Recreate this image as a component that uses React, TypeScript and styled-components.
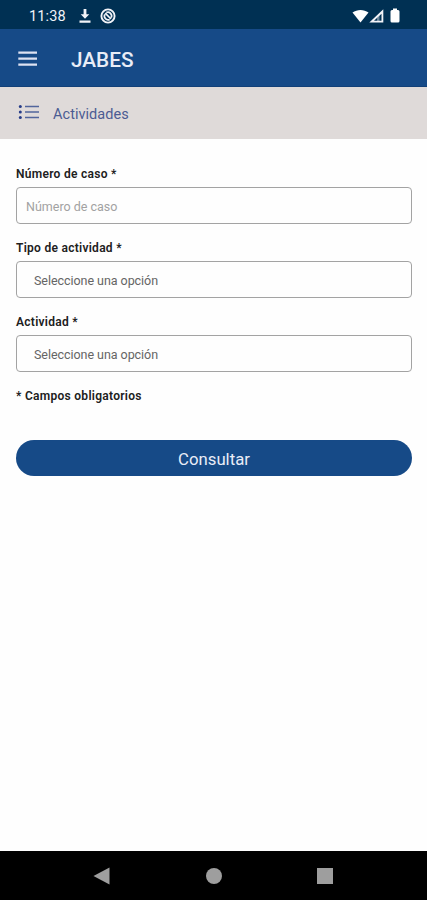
import React from 'react';
import styled, { createGlobalStyle } from 'styled-components';

const GlobalStyle = createGlobalStyle`
  * { box-sizing: border-box; }
  body { margin: 0; background: #fff; font-family: Roboto, "Liberation Sans", sans-serif; }
`;

const Screen = styled.div`
  display: flex;
  flex-direction: column;
  width: 100%;
  height: 900px;
  overflow: hidden;
  background: #fefefe;
`;

const StatusBar = styled.header`
  display: flex;
  align-items: center;
  height: 29px;
  padding: 2px 27px 0 29px;
  background: #003053;
  color: #f2f3f8;
`;

const Clock = styled.span`
  width: 49px;
  margin-top: 2px;
  font-size: 14.5px;
  line-height: 18px;
  letter-spacing: 0.15px;
`;

const StatusIcons = styled.div<{ $end?: boolean }>`
  display: flex;
  align-items: center;
  margin-left: ${({ $end }) => ($end ? 'auto' : '0')};
`;

const AppBar = styled.div`
  display: flex;
  align-items: center;
  height: 58px;
  padding: 2px 18px 0;
  background: #164a87;
  border-bottom: 1px solid #124078;
`;

const MenuButton = styled.button`
  display: flex;
  width: 52px;
  padding: 0;
  border: 0;
  background: none;
`;

const Title = styled.h1`
  margin: 2px 0 0 1px;
  font-size: 20.75px;
  font-weight: 500;
  line-height: 26px;
  color: #e9edf7;
`;

const SectionBar = styled.div`
  display: flex;
  align-items: center;
  gap: 13px;
  height: 52px;
  padding: 0 18px;
  background: #dfdad9;
`;

const SectionName = styled.h2`
  margin: 3px 0 0;
  font-size: 14.5px;
  font-weight: 400;
  line-height: 20px;
  letter-spacing: 0.04px;
  color: #4c5c93;
`;

const Form = styled.form`
  display: flex;
  flex: 1;
  flex-direction: column;
  padding: 28px 15px 0 16px;
`;

const Field = styled.div`
  display: flex;
  flex-direction: column;
  height: 74px;
`;

const Label = styled.label`
  height: 20px;
  font-size: 12px;
  font-weight: 600;
  line-height: 15px;
  letter-spacing: 0.28px;
  white-space: nowrap;
  color: #202020;
`;

const TextInput = styled.input`
  height: 37px;
  padding: 1px 9px 0;
  border: 1px solid #a3a3a3;
  border-radius: 4px;
  background: #fefefe;
  font: 400 12.5px Roboto, sans-serif;
  letter-spacing: 0;
  outline: 0;
  &::placeholder { color: #a2a2a2; opacity: 1; }
`;

const SelectBox = styled.div`
  display: flex;
  align-items: center;
  height: 37px;
  padding: 1px 17px 0;
  border: 1px solid #a3a3a3;
  border-radius: 4px;
  font-size: 12.5px;
  letter-spacing: -0.05px;
  color: #656565;
`;

const RequiredNote = styled(Label).attrs({ as: 'p' })`
  margin: 0 0 31px;
`;

const SubmitButton = styled.button`
  height: 36px;
  padding: 2px 0 0;
  border: 0;
  border-radius: 18px;
  background: #164a87;
  color: #e9edf7;
  font: 400 16.75px Roboto, sans-serif;
  letter-spacing: 0;
`;

const NavBar = styled.nav`
  display: flex;
  align-items: center;
  justify-content: space-between;
  height: 49px;
  padding: 0 93px;
  background: #000;
`;

const DownloadIcon = () => (
  <svg width="14" height="16" viewBox="0 0 14 16" fill="currentColor">
    <path d="M5.6 1h2.8v5.2H11.300L7 10.800 2.700 6.200h2.900zM1.500 12.500h11v2.200h-11z" />
  </svg>
);

const SyncIcon = () => (
  <svg width="16" height="16" viewBox="0 0 16 16" fill="none" stroke="currentColor">
    <circle cx="8" cy="8" r="6.600" strokeWidth="1.900" />
    <path d="M6.300 4.600A3.700 3.700 0 0 1 11.200 9.600M9.700 11.400A3.700 3.700 0 0 1 4.800 6.400M5.200 5.200l5.800 5.800" strokeWidth="1.700" />
  </svg>
);

const WifiIcon = () => (
  <svg width="17" height="14" viewBox="0 0 17 14" fill="#fff">
    <path d="M.500 3.600C5.200 0 11.800 0 16.500 3.600L8.500 13.500z" />
  </svg>
);

const SignalIcon = () => (
  <svg width="15" height="14" viewBox="0 0 15 14" fill="#f2f3f8">
    <path fillRule="evenodd" d="M14.300.300V13.600H.300zM12.500 4.800L5 11.700H12.500z" />
    <path d="M8 8.500L10.500 6v6H8z" opacity=".45" />
  </svg>
);

const BatteryIcon = () => (
  <svg width="10" height="15" viewBox="0 0 10 15" fill="#fff">
    <path d="M3 .500h4v1.500h1q1.500 0 1.500 1.500v9.500q0 1.500-1.500 1.500h-6Q.500 14.500.500 13V3.500q0-1.500 1.500-1.500H3z" />
  </svg>
);

const MenuIcon = () => (
  <svg width="20" height="15" viewBox="0 0 20 15" fill="#dde2f2">
    <path d="M.300.500h18.700v2.200H.300zM.300 6.500h18.700v2.200H.300zM.300 12.500h18.700v2.200H.300z" />
  </svg>
);

const ListIcon = () => (
  <svg width="22" height="16" viewBox="0 0 22 16">
    <path d="M7 2.500h14M7 8h14M7 13.500h14" stroke="#52659c" strokeWidth="1.600" />
    <g fill="#263c88">
      <circle cx="2.300" cy="2.500" r="1.500" />
      <circle cx="2.300" cy="8" r="1.500" />
      <circle cx="2.300" cy="13.500" r="1.500" />
    </g>
  </svg>
);

const NavIcon = ({ shape }: { shape: React.ReactNode }) => (
  <svg width="18" height="18" viewBox="0 0 18 18" fill="#9e9e9e">{shape}</svg>
);

const SectionIcon = styled.span`
  display: flex;
  margin-bottom: 2px;
`;

const IconSpacer = styled.span<{ $before: number }>`
  display: flex;
  margin-left: ${({ $before }) => $before}px;
`;

export default function App() {
  return (
    <Screen>
      <GlobalStyle />
      <StatusBar>
        <Clock>11:38</Clock>
        <StatusIcons>
          <DownloadIcon />
          <IconSpacer $before={8}><SyncIcon /></IconSpacer>
        </StatusIcons>
        <StatusIcons $end>
          <WifiIcon />
          <IconSpacer $before={0}><SignalIcon /></IconSpacer>
          <IconSpacer $before={6}><BatteryIcon /></IconSpacer>
        </StatusIcons>
      </StatusBar>
      <AppBar>
        <MenuButton type="button" aria-label="Menú"><MenuIcon /></MenuButton>
        <Title>JABES</Title>
      </AppBar>
      <SectionBar>
        <SectionIcon><ListIcon /></SectionIcon>
        <SectionName>Actividades</SectionName>
      </SectionBar>
      <Form>
        <Field>
          <Label htmlFor="caso">Número de caso *</Label>
          <TextInput id="caso" placeholder="Número de caso" />
        </Field>
        <Field>
          <Label>Tipo de actividad *</Label>
          <SelectBox>Seleccione una opción</SelectBox>
        </Field>
        <Field>
          <Label>Actividad *</Label>
          <SelectBox>Seleccione una opción</SelectBox>
        </Field>
        <RequiredNote>* Campos obligatorios</RequiredNote>
        <SubmitButton type="button">Consultar</SubmitButton>
      </Form>
      <NavBar>
        <NavIcon shape={<path d="M.500 9L16.500.500v17z" />} />
        <NavIcon shape={<circle cx="9" cy="9" r="8" />} />
        <NavIcon shape={<rect x="1" y="1" width="16" height="16" />} />
      </NavBar>
    </Screen>
  );
}
